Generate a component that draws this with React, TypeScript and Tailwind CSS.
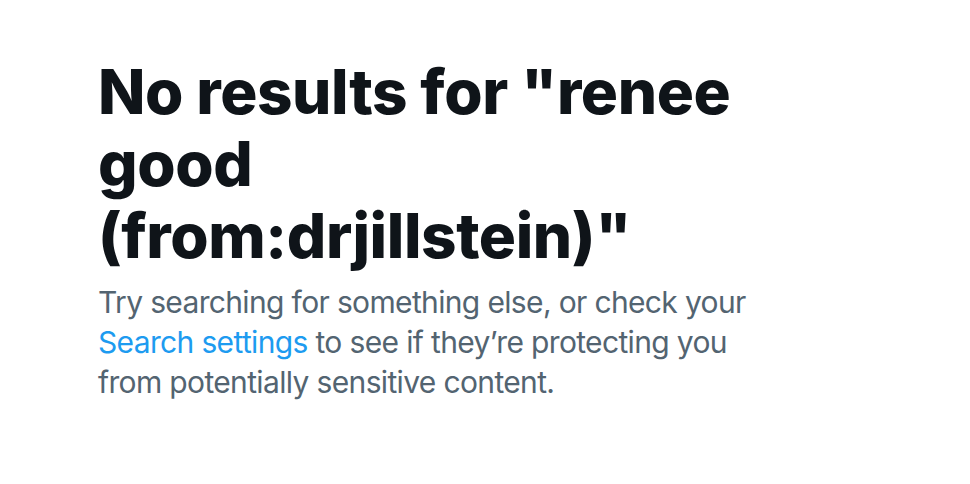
import React from 'react';

function EmptyState() {
  return (
    <div className="pl-[98px] pt-[56px] pr-8">
      <div className="max-w-[672px]">
        <h1 className="text-[62px] leading-[72px] font-extrabold text-[#0f1419] tracking-[-0.4px] break-words">
          No results for "renee good (from:drjillstein)"
        </h1>
        <p className="mt-[10px] text-[30px] leading-[40px] text-[#536471] tracking-[-0.65px]">
          Try searching for something else, or check your{' '}
          <a href="#" className="text-[#1d9bf0]">
            Search settings
          </a>{' '}
          to see if they’re protecting you from potentially sensitive content.
        </p>
      </div>
    </div>
  );
}

export default function App() {
  return (
    <div className="w-[970px] h-[484px] bg-white overflow-hidden font-['Inter','Liberation_Sans',sans-serif]">
      <EmptyState />
    </div>
  );
}
